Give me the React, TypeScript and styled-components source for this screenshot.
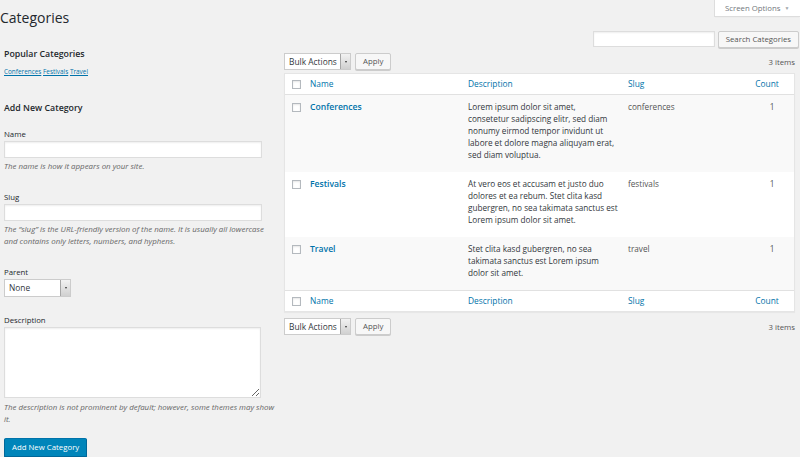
import React from "react";
import styled, { createGlobalStyle } from "styled-components";

const GlobalStyle = createGlobalStyle`
  body {
    margin: 0;
    background: #f1f1f1;
    font-family: "Open Sans", "Liberation Sans", sans-serif;
    color: #444;
    font-size: 8px;
  }
  * { box-sizing: border-box; }
`;

const Page = styled.div`
  width: 800px;
  height: 457px;
  overflow: hidden;
`;

const TopBar = styled.div`
  display: flex;
  justify-content: space-between;
  align-items: flex-start;
`;

const Title = styled.h1`
  margin: 8px 0 0;
  font-size: 14px;
  font-weight: 400;
  line-height: 20px;
  color: #23282d;
`;

const ScreenOptionsTab = styled.div`
  display: flex;
  align-items: center;
  gap: 4px;
  width: 86px;
  height: 17px;
  padding-left: 10px;
  background: #fff;
  border: 1px solid #ddd;
  border-top: none;
  border-right: none;
  box-shadow: 0 1px 1px -1px rgba(0, 0, 0, 0.1);
  font-size: 7.8px;
  color: #72777c;
`;

const TabArrow = styled.span`
  font-size: 5px;
  color: #a0a5aa;
`;

const SearchRow = styled.div`
  display: flex;
  justify-content: flex-end;
  gap: 3px;
  margin-top: 3px;
  padding-right: 1px;
`;

const SearchInput = styled.input`
  width: 122px;
  height: 16px;
  border: 1px solid #ddd;
  background: #fff;
  box-shadow: inset 0 1px 2px rgba(0, 0, 0, 0.07);
  outline: none;
`;

const Button = styled.button<{ $primary?: boolean; $h?: number }>`
  height: ${(p) => p.$h ?? 17}px;
  padding: 0 7px;
  font-family: inherit;
  font-size: 7.8px;
  line-height: 15px;
  border-radius: 2px;
  cursor: pointer;
  white-space: nowrap;
  border: 1px solid;
  border-color: ${(p) => (p.$primary ? "#0073aa #006799 #006799" : "#ccc")};
  background: ${(p) => (p.$primary ? "#0085ba" : "#f7f7f7")};
  color: ${(p) => (p.$primary ? "#fff" : "#555")};
  box-shadow: ${(p) => (p.$primary ? "0 1px 0 #006799" : "0 1px 0 #ccc")};
`;

const Columns = styled.div`
  display: flex;
  align-items: flex-start;
  padding-right: 5px;
`;

const LeftCol = styled.div`
  flex: none;
  width: 273px;
  margin-left: 4px;
`;

const RightCol = styled.div`
  flex: none;
  width: 511px;
  margin-left: 7px;
`;

const SectionHeading = styled.h2<{ $top?: number }>`
  margin: ${(p) => p.$top ?? 0}px 0 0;
  font-size: 8.8px;
  font-weight: 600;
  line-height: 13px;
  color: #23282d;
`;

const TagCloud = styled.div`
  margin-top: 7px;
  font-size: 6.4px;
  line-height: 8px;
  a {
    color: #0073aa;
    text-decoration: underline;
  }
`;

const Field = styled.div<{ $top?: number }>`
  margin-top: ${(p) => p.$top ?? 18}px;
`;

const FieldLabel = styled.label`
  display: block;
  font-size: 7.8px;
  line-height: 12px;
  color: #23282d;
  margin-bottom: 1px;
`;

const TextInput = styled.input`
  display: block;
  width: 258px;
  height: 17px;
  border: 1px solid #ddd;
  background: #fff;
  box-shadow: inset 0 1px 2px rgba(0, 0, 0, 0.07);
  outline: none;
`;

const TextArea = styled.textarea`
  display: block;
  width: 257px;
  height: 71px;
  margin-bottom: 3px;
  border: 1px solid #ddd;
  background: #fff;
  box-shadow: inset 0 1px 2px rgba(0, 0, 0, 0.07);
  resize: vertical;
  outline: none;
`;

const Hint = styled.p`
  margin: 2px 0 0;
  font-style: italic;
  font-size: 7.9px;
  line-height: 12.5px;
  color: #666;
`;

const SelectBox = styled.div<{ $h: number; $size: number }>`
  display: inline-flex;
  width: 67px;
  height: ${(p) => p.$h}px;
  border: 1px solid #ccc;
  background: #fff;
  font-size: ${(p) => p.$size}px;
  color: #32373c;
`;

const SelectText = styled.span`
  flex: 1;
  display: flex;
  align-items: center;
  padding-left: 4px;
  white-space: nowrap;
`;

const SelectArrow = styled.span`
  flex: none;
  width: 10px;
  display: flex;
  align-items: center;
  justify-content: center;
  border-left: 1px solid #a6a6a6;
  background: linear-gradient(#f2f2f2, #d0d0d0);
  &::after {
    content: "";
    border-left: 1.5px solid transparent;
    border-right: 1.5px solid transparent;
    border-top: 2px solid #333;
  }
`;

const SubmitRow = styled.div`
  margin-top: 12px;
`;

const BulkRow = styled.div<{ $top: number }>`
  display: flex;
  align-items: center;
  gap: 4px;
  margin-top: ${(p) => p.$top}px;
`;

const ItemsCount = styled.span`
  margin-left: auto;
  font-size: 7.8px;
  color: #555;
`;

const TableFrame = styled.div`
  margin-top: 3px;
  border: 1px solid #e5e5e5;
  background: #fff;
  box-shadow: 0 1px 1px rgba(0, 0, 0, 0.04);
`;

const Table = styled.table`
  width: 100%;
  border-collapse: collapse;
  table-layout: fixed;
`;

const HeadCell = styled.th<{ $w?: number; $center?: boolean; $pl?: number; $foot?: boolean }>`
  width: ${(p) => (p.$w ? `${p.$w}px` : "auto")};
  padding: 4px 8px 4px ${(p) => p.$pl ?? 8}px;
  text-align: ${(p) => (p.$center ? "center" : "left")};
  font-weight: 400;
  font-size: 8.4px;
  line-height: 12px;
  color: #0073aa;
  vertical-align: middle;
  border-top: ${(p) => (p.$foot ? "1px solid #e1e1e1" : "none")};
  border-bottom: ${(p) => (p.$foot ? "none" : "1px solid #e1e1e1")};
`;

const BodyRow = styled.tr<{ $alt: boolean }>`
  background: ${(p) => (p.$alt ? "#f9f9f9" : "#fff")};
`;

const Cell = styled.td<{ $center?: boolean; $pl?: number; $muted?: boolean }>`
  padding: 6px 2px 11px ${(p) => p.$pl ?? 8}px;
  vertical-align: top;
  text-align: ${(p) => (p.$center ? "center" : "left")};
  font-size: 8.2px;
  line-height: 12px;
  color: ${(p) => (p.$muted ? "#555" : "#32373c")};
`;

const RowTitle = styled.a`
  font-size: 8.6px;
  font-weight: 600;
  color: #0073aa;
  text-decoration: none;
`;

const Check = styled.input.attrs({ type: "checkbox" })<{ $top?: number }>`
  appearance: none;
  display: block;
  margin: ${(p) => p.$top ?? 0}px 0 0;
  width: 9px;
  height: 9px;
  border: 1px solid #b4b9be;
  background: #fff;
  box-shadow: inset 0 1px 2px rgba(0, 0, 0, 0.1);
`;

const categories = [
  {
    name: "Conferences",
    slug: "conferences",
    count: 1,
    description:
      "Lorem ipsum dolor sit amet, consetetur sadipscing elitr, sed diam nonumy eirmod tempor invidunt ut labore et dolore magna aliquyam erat, sed diam voluptua.",
  },
  {
    name: "Festivals",
    slug: "festivals",
    count: 1,
    description:
      "At vero eos et accusam et justo duo dolores et ea rebum. Stet clita kasd gubergren, no sea takimata sanctus est Lorem ipsum dolor sit amet.",
  },
  {
    name: "Travel",
    slug: "travel",
    count: 1,
    description:
      "Stet clita kasd gubergren, no sea takimata sanctus est Lorem ipsum dolor sit amet.",
  },
];

const HeaderCells = ({ foot }: { foot?: boolean }) => (
  <tr>
    <HeadCell $w={19} $pl={7} $foot={foot}>
      <Check />
    </HeadCell>
    <HeadCell $w={156} $pl={6} $foot={foot}>Name</HeadCell>
    <HeadCell $w={160} $foot={foot}>Description</HeadCell>
    <HeadCell $w={120} $foot={foot}>Slug</HeadCell>
    <HeadCell $w={54} $center $pl={8} $foot={foot}>Count</HeadCell>
  </tr>
);

const BulkActions = ({ top }: { top: number }) => (
  <BulkRow $top={top}>
    <SelectBox $h={17} $size={8.4}>
      <SelectText>Bulk Actions</SelectText>
      <SelectArrow />
    </SelectBox>
    <Button>Apply</Button>
    <ItemsCount>3 items</ItemsCount>
  </BulkRow>
);

const App = () => {
  return (
    <Page>
      <GlobalStyle />
      <TopBar>
        <Title>Categories</Title>
        <ScreenOptionsTab>
          Screen Options <TabArrow>▼</TabArrow>
        </ScreenOptionsTab>
      </TopBar>
      <SearchRow>
        <SearchInput type="search" />
        <Button>Search Categories</Button>
      </SearchRow>
      <Columns>
        <LeftCol>
          <SectionHeading>Popular Categories</SectionHeading>
          <TagCloud>
            <a href="#">Conferences</a> <a href="#">Festivals</a>{" "}
            <a href="#">Travel</a>
          </TagCloud>
          <SectionHeading $top={26}>Add New Category</SectionHeading>
          <Field $top={13}>
            <FieldLabel>Name</FieldLabel>
            <TextInput type="text" />
            <Hint>The name is how it appears on your site.</Hint>
          </Field>
          <Field>
            <FieldLabel>Slug</FieldLabel>
            <TextInput type="text" />
            <Hint>
              The “slug” is the URL-friendly version of the name. It is usually
              all lowercase and contains only letters, numbers, and hyphens.
            </Hint>
          </Field>
          <Field>
            <FieldLabel>Parent</FieldLabel>
            <SelectBox $h={18} $size={8.4}>
              <SelectText>None</SelectText>
              <SelectArrow />
            </SelectBox>
          </Field>
          <Field $top={17}>
            <FieldLabel>Description</FieldLabel>
            <TextArea />
            <Hint>
              The description is not prominent by default; however, some themes
              may show it.
            </Hint>
          </Field>
          <SubmitRow>
            <Button $primary $h={19}>
              Add New Category
            </Button>
          </SubmitRow>
        </LeftCol>
        <RightCol>
          <BulkActions top={5} />
          <TableFrame>
            <Table>
              <thead>
                <HeaderCells />
              </thead>
              <tbody>
                {categories.map((c, i) => (
                  <BodyRow key={c.slug} $alt={i % 2 === 0}>
                    <Cell $pl={7}>
                      <Check $top={2} />
                    </Cell>
                    <Cell $pl={6}>
                      <RowTitle href="#">{c.name}</RowTitle>
                    </Cell>
                    <Cell>{c.description}</Cell>
                    <Cell $muted>{c.slug}</Cell>
                    <Cell $center $muted $pl={12}>
                      {c.count}
                    </Cell>
                  </BodyRow>
                ))}
              </tbody>
              <tfoot>
                <HeaderCells foot />
              </tfoot>
            </Table>
          </TableFrame>
          <BulkActions top={6} />
        </RightCol>
      </Columns>
    </Page>
  );
};

export default App;
